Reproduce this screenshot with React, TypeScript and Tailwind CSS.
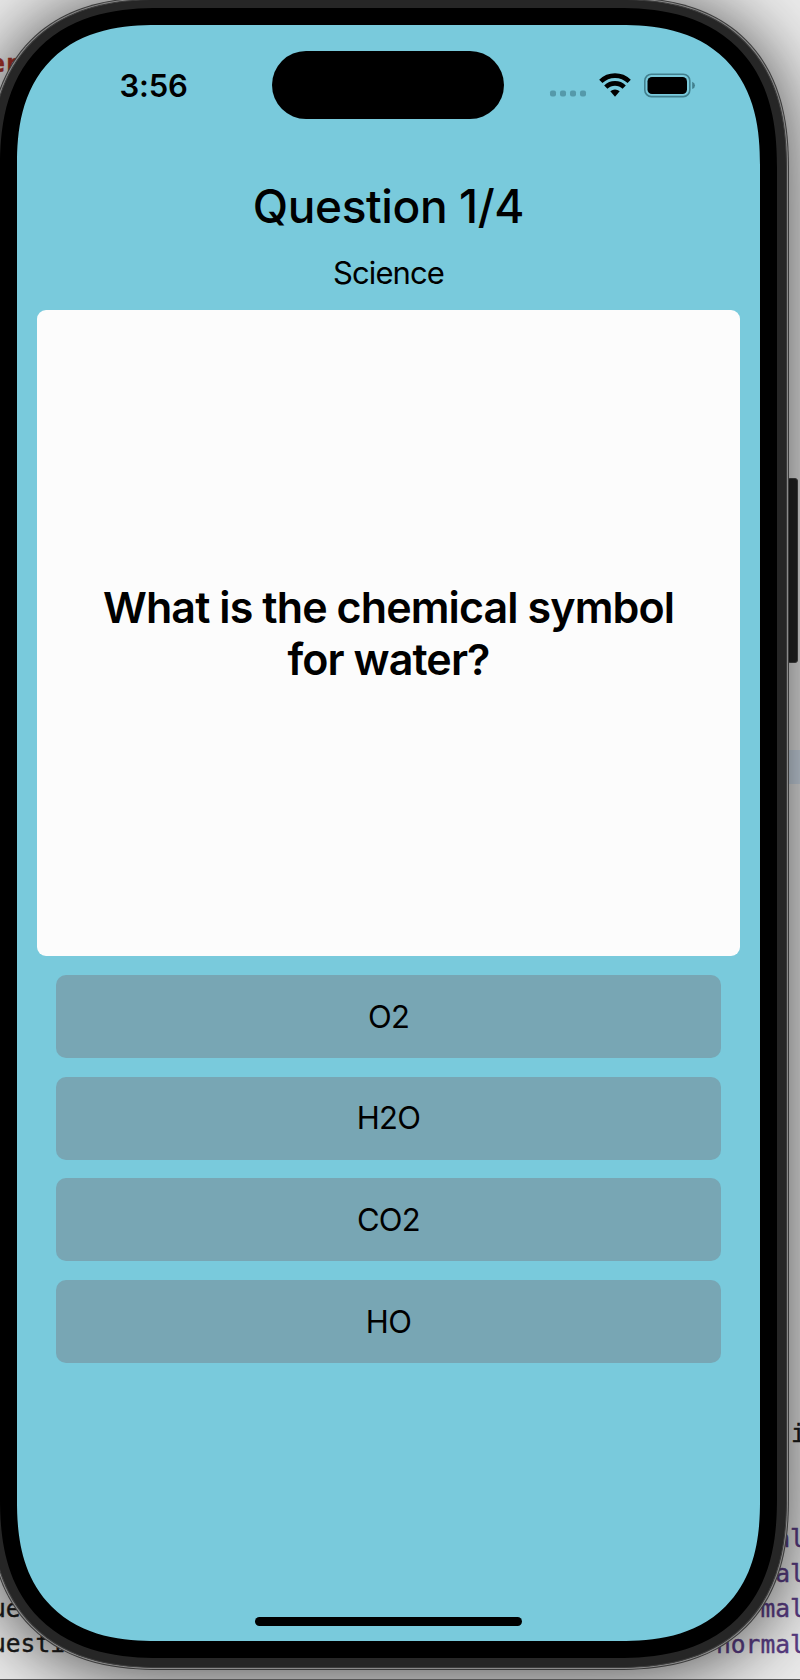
import React from "react";

const answers = ["O2", "H2O", "CO2", "HO"];

const codeLines = [
  { text: "er", place: "left-[-10px] top-[47px] text-[#a8322a] font-bold" },
  { text: "ue", place: "left-[-9px] top-[1592px] text-[#1c1c1c]" },
  { text: "uesti", place: "left-[-9px] top-[1627px] text-[#1c1c1c]" },
  { text: "i", place: "left-[791px] top-[1417px] text-[#1c1c1c]" },
  { text: "normal", place: "left-[716px] top-[1522px] text-[#5a3d85]" },
  { text: "normal", place: "left-[716px] top-[1557px] text-[#5a3d85]" },
  { text: "normal", place: "left-[716px] top-[1592px] text-[#5a3d85]" },
  { text: "normal", place: "left-[716px] top-[1628px] text-[#5a3d85]" },
];

function Editor() {
  return (
    <div className="absolute inset-0 overflow-hidden bg-[#ececec]">
      <div className="absolute left-[780px] top-[750px] h-[34px] w-[20px] bg-[#d3dfec]" />
      {codeLines.map((line, i) => (
        <span
          key={i}
          className={`absolute whitespace-pre font-['DejaVu_Sans_Mono',monospace] text-[24.6px] leading-[34px] [-webkit-text-stroke:0.4px] ${line.place}`}
        >
          {line.text}
        </span>
      ))}
    </div>
  );
}

function StatusIcons() {
  return (
    <svg width="148" height="26" viewBox="548 72 148 26" fill="none">
      <g fill="#5599aa">
        <rect x="550" y="90.5" width="6" height="6" rx="2" />
        <rect x="560" y="90.5" width="6" height="6" rx="2" />
        <rect x="570" y="90.5" width="6" height="6" rx="2" />
        <rect x="580" y="90.5" width="6" height="6" rx="2" />
      </g>
      <g stroke="#000" strokeWidth="4.6">
        <path d="M600.8 81.4A20.3 20.3 0 0 1 629.2 81.4" />
        <path d="M605.8 87.2A13 13 0 0 1 624.2 87.2" />
      </g>
      <path d="M610.3 91.3A7.2 7.2 0 0 1 619.7 91.3L615 96.8Z" fill="#000" />
      <rect x="644.8" y="74.2" width="45" height="22.4" rx="6.6" stroke="#42808e" strokeWidth="1.6" />
      <rect x="647.5" y="77" width="39.5" height="17" rx="4.5" fill="#000" />
      <path d="M692.2 81.8Q695 83 695 85.4Q695 87.8 692.2 89Z" fill="#42808e" />
    </svg>
  );
}

function StatusBar() {
  return (
    <div className="flex h-[94px] shrink-0 items-start pt-[26px]">
      <div className="w-[255px] pl-[102.5px] pt-[11px] text-[31px] leading-[48px] font-semibold tracking-[-0.2px]">
        3:56
      </div>
      <div className="h-[68px] w-[232px] rounded-full bg-black" />
      <div className="pl-[44px] pt-[21px]">
        <StatusIcons />
      </div>
    </div>
  );
}

function Quiz() {
  return (
    <main className="flex flex-col items-center">
      <h1 className="mt-[59px] text-[46px] leading-[56px] font-medium tracking-[-0.4px]">Question 1/4</h1>
      <p className="mt-[19px] text-[31px] leading-[40px] tracking-[-0.9px]">Science</p>
      <section className="mt-[17px] flex h-[646px] w-[703px] items-center justify-center rounded-[9px] bg-[#fcfcfc]">
        <h2 className="text-center text-[43px] leading-[52.5px] font-semibold tracking-[-0.9px]">
          What is the chemical symbol
          <br />
          for water?
        </h2>
      </section>
      <div className="mt-[19px] flex flex-col gap-[18.7px]">
        {answers.map((answer) => (
          <button
            key={answer}
            className="h-[83px] w-[665px] rounded-[10px] bg-[#78a6b4] text-[31px] leading-[40px] tracking-[-0.7px]"
          >
            {answer}
          </button>
        ))}
      </div>
    </main>
  );
}

export default function App() {
  return (
    <div className="relative h-[1680px] w-[800px] overflow-hidden font-['Inter',sans-serif] text-black">
      <Editor />
      <div className="absolute left-[787px] top-[478px] h-[185px] w-[11px] rounded-[3px] border border-[#4a4a4a] bg-[#252525]" />
      <div className="relative -ml-[12px] -mt-[3px] h-[1673px] w-[801px] rounded-[147px] border border-[#3c3c3c] bg-[#8a8a8a] p-[1px] shadow-[0_4px_75px_rgba(0,0,0,0.72)] supports-[corner-shape:squircle]:rounded-[173px] supports-[corner-shape:squircle]:[corner-shape:superellipse(1.29)]">
        <div className="h-full w-full rounded-[145px] border border-[#3c3c3c] bg-[#262626] pt-[8px] pr-[9px] pb-[9px] pl-[9px] supports-[corner-shape:squircle]:rounded-[171px] supports-[corner-shape:squircle]:[corner-shape:superellipse(1.29)]">
          <div className="h-full w-full rounded-[136px] bg-black p-[17px] supports-[corner-shape:squircle]:rounded-[160px] supports-[corner-shape:squircle]:[corner-shape:superellipse(1.29)]">
            <div className="flex h-full w-full flex-col overflow-hidden rounded-[119px] bg-[#79cadc] supports-[corner-shape:squircle]:rounded-[140px] supports-[corner-shape:squircle]:[corner-shape:superellipse(1.29)]">
              <StatusBar />
              <Quiz />
              <div className="mt-auto mb-[15px] h-[9px] w-[267px] shrink-0 self-center rounded-full bg-black" />
            </div>
          </div>
        </div>
      </div>
      <div className="absolute bottom-0 left-0 h-px w-full bg-[#555]" />
    </div>
  );
}
